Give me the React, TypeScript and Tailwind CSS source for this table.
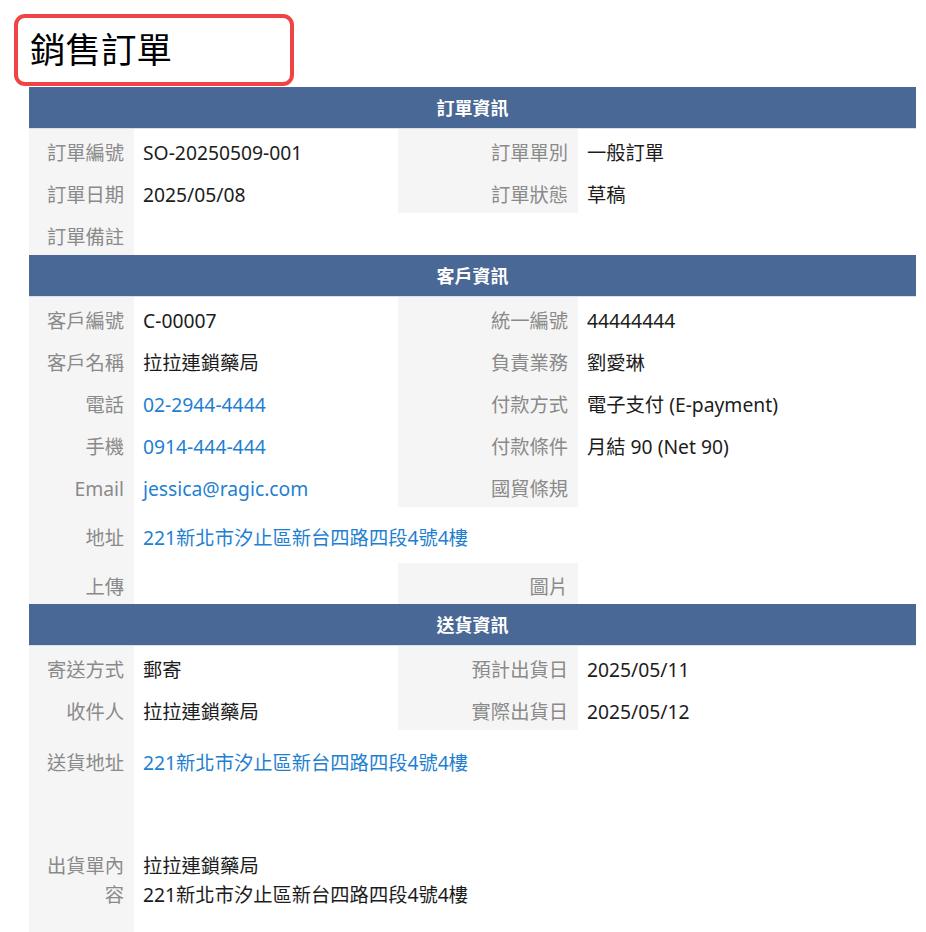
import React from "react";

const FONT = { fontFamily: '"Noto Sans", "Noto Sans CJK TC", sans-serif' };

function Label({ text, className = "" }: { text?: string; className?: string }) {
  return (
    <div className={`bg-[#f5f5f5] text-[#8a8a8a] text-right pr-[10px] pl-[10px] pt-[9px] leading-[30px] ${className}`}>
      {text}
    </div>
  );
}

function Value({ text, link, className = "" }: { text?: string; link?: boolean; className?: string }) {
  return (
    <div className={`pl-[9px] pr-[8px] pt-[9px] leading-[30px] whitespace-nowrap ${link ? "text-[#1f7fd1]" : "text-[#1c1c1c]"} ${className}`}>
      {text}
    </div>
  );
}

function Header({ title }: { title: string }) {
  return (
    <div className="h-[42px] bg-[#4a6895] border-b border-[#d8e0ea] flex items-center justify-center pt-[2px] text-white font-bold text-[18px]">
      {title}
    </div>
  );
}

const GRID = "grid grid-cols-[105px_264px_180px_338px]";

function Row4({ l1, v1, l2, v2, link1, link2, h = "h-[42px]" }: { l1?: string; v1?: string; l2?: string; v2?: string; link1?: boolean; link2?: boolean; h?: string }) {
  return (
    <div className={`${GRID} ${h}`}>
      <Label text={l1} />
      <Value text={v1} link={link1} />
      <Label text={l2} />
      <Value text={v2} link={link2} />
    </div>
  );
}

function RowWide({ l, v, link, h = "h-[42px]", pt = "pt-[9px]" }: { l?: string; v?: string; link?: boolean; h?: string; pt?: string }) {
  return (
    <div className={`grid grid-cols-[105px_1fr] ${h}`}>
      <div className={`bg-[#f5f5f5] text-[#8a8a8a] text-right pr-[10px] pl-[10px] ${pt} leading-[30px]`}>{l}</div>
      <div className={`pl-[9px] ${pt} leading-[30px] ${link ? "text-[#1f7fd1]" : "text-[#1c1c1c]"}`}>{v}</div>
    </div>
  );
}

export default function App() {
  return (
    <div className="bg-white min-h-[932px] text-[19.3px]" style={FONT}>
      <div className="pl-[14px] pt-[14px]">
        <div className="w-[280px] h-[72px] border-[4px] border-[#f04444] rounded-[11px] flex items-center pl-[12px] pb-[1px]">
          <span className="text-[35.5px] text-black leading-none">銷售訂單</span>
        </div>
      </div>
      <div className="ml-[29px] w-[887px] mt-[1px]">
        <Header title="訂單資訊" />
        <Row4 l1="訂單編號" v1="SO-20250509-001" l2="訂單單別" v2="一般訂單" />
        <Row4 l1="訂單日期" v1="2025/05/08" l2="訂單狀態" v2="草稿" />
        <RowWide l="訂單備註" />
        <Header title="客戶資訊" />
        <Row4 l1="客戶編號" v1="C-00007" l2="統一編號" v2="44444444" />
        <Row4 l1="客戶名稱" v1="拉拉連鎖藥局" l2="負責業務" v2="劉愛琳" />
        <Row4 l1="電話" v1="02-2944-4444" link1 l2="付款方式" v2="電子支付 (E-payment)" />
        <Row4 l1="手機" v1="0914-444-444" link1 l2="付款條件" v2="月結 90 (Net 90)" />
        <Row4 l1="Email" v1="jessica@ragic.com" link1 l2="國貿條規" v2="" />
        <RowWide l="地址" v="221新北市汐止區新台四路四段4號4樓" link h="h-[56px]" pt="pt-[16px]" />
        <Row4 l1="上傳" v1="" l2="圖片" v2="" h="h-[41px]" />
        <Header title="送貨資訊" />
        <Row4 l1="寄送方式" v1="郵寄" l2="預計出貨日" v2="2025/05/11" />
        <Row4 l1="收件人" v1="拉拉連鎖藥局" l2="實際出貨日" v2="2025/05/12" />
        <RowWide l="送貨地址" v="221新北市汐止區新台四路四段4號4樓" link h="h-[102px]" pt="pt-[18px]" />
        <div className="grid grid-cols-[105px_1fr] h-[120px]">
          <div className="bg-[#f5f5f5] text-[#8a8a8a] text-right pr-[10px] pl-[12px] pt-[19px] leading-[29px]">出貨單內容</div>
          <div className="pl-[9px] pt-[19px] leading-[29px] text-[#1c1c1c]">
            <div>拉拉連鎖藥局</div>
            <div>221新北市汐止區新台四路四段4號4樓</div>
          </div>
        </div>
      </div>
    </div>
  );
}
